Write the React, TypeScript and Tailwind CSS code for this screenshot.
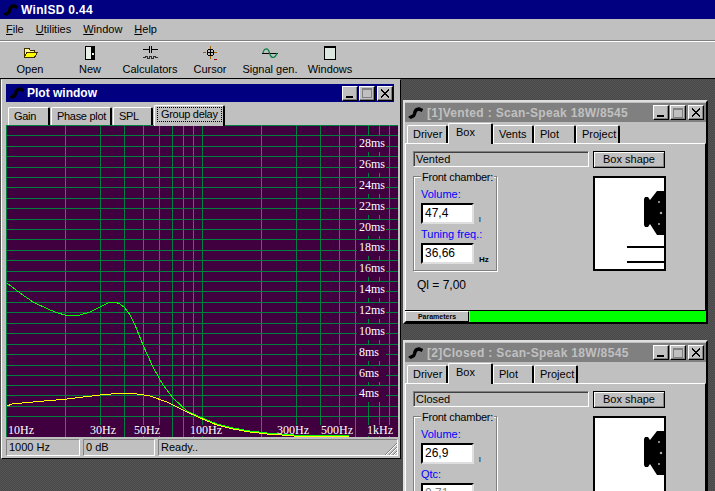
import type { ReactNode } from "react";

const vLines = [
  [65, 0], [100, 1], [124, 1], [143, 0], [159, 0], [172, 1], [183, 0], [193, 0], [202, 1],
  [261, 0], [296, 1], [320, 1], [339, 0], [355, 0], [368, 1], [379, 0], [389, 0],
];
const hLines = [
  135, 146, 156, 167, 177, 187, 198, 208, 219, 229, 239, 250, 260, 271, 281, 291, 302, 312, 323,
  333, 344, 354, 365, 375, 385, 395, 406, 416,
];
const msLabels = [
  ["28ms", 144], ["26ms", 165], ["24ms", 186], ["22ms", 207], ["20ms", 228], ["18ms", 248], ["16ms", 269],
  ["14ms", 290], ["12ms", 311], ["10ms", 332], ["8ms", 353], ["6ms", 374], ["4ms", 394],
] as const;
const hzLabels = [
  ["10Hz", 8, 28], ["30Hz", 90, 28], ["50Hz", 134, 28], ["100Hz", 190, 34], ["300Hz", 277, 34], ["500Hz", 321, 34], ["1kHz", 367, 28],
] as const;

const green =
  "7,283 12,287 20,293 33,302 50,310 58,313 65,315 80,315 90,312 100,307 108,303 115,302 120,304 125,308 130,315 135,325 143,345 153,367 163,385 173,398 187,411 200,417 217,424 233,428 250,431 267,433 282,434 300,435.5 349,435.5";
const yellow =
  "7,406 12,404 33,402 67,399 100,395 123,393 137,394 150,396 167,402 183,410 200,418 217,425 233,429 250,432 267,434 282,435 300,436.5 349,436.5";

// y coordinates above are taken from the screen, the plot starts at 6,125
function Chart() {
  return (
    <svg width={392} height={312} viewBox="6 125 392 312" className="block">
      <rect x={6} y={125} width={392} height={312} fill="#400040" />
      <g shapeRendering="crispEdges">
        <line x1={6.5} y1={125} x2={6.5} y2={437} stroke="#008040" />
        <line x1={6} y1={125.5} x2={398} y2={125.5} stroke="#008040" />
        {vLines.map(([x, bright]) => (
          <line key={x} x1={x + 0.5} y1={125} x2={x + 0.5} y2={437} stroke={bright ? "#008040" : "#3a7a60"} />
        ))}
        {hLines.map((y) => (
          <line key={y} x1={6} y1={y + 0.5} x2={398} y2={y + 0.5} stroke="#008040" />
        ))}
        {msLabels.map(([t, y]) => (
          <rect key={t} x={357} y={y - 8} width={29} height={16} fill="#400040" />
        ))}
        {hzLabels.map(([t, x, w]) => (
          <rect key={t} x={x - 1} y={425} width={w} height={11} fill="#400040" />
        ))}
        <polyline points={green} fill="none" stroke="#00ff00" />
        <polyline points={yellow} fill="none" stroke="#ffff00" />
      </g>
      <g fill="#ffffff" className="font-['Liberation_Serif',serif] text-[12px]">
        {msLabels.map(([t, y]) => (
          <text key={t} x={359} y={y + 3}>{t}</text>
        ))}
        {hzLabels.map(([t, x]) => (
          <text key={t} x={x} y={434}>{t}</text>
        ))}
      </g>
    </svg>
  );
}

function Logo() {
  return (
    <svg width={16} height={14} viewBox="0 0 16 14" className="shrink-0">
      <path d="M1.5 12 C3 10 6 11 6.5 8 C7 4.5 8.5 3 11 3 L14.5 4.5" fill="none" stroke="#000" strokeWidth={3.4} />
    </svg>
  );
}

function CtlBtn({ children }: { children: ReactNode }) {
  return (
    <div className="w-[16px] h-[15px] bg-[#c0c0c0] border border-t-white border-l-white border-r-black border-b-black shadow-[inset_-1px_-1px_0_#808080] flex items-center justify-center">
      {children}
    </div>
  );
}

function WinControls() {
  return (
    <div className="flex gap-[1px] items-center">
      <CtlBtn>
        <div className="w-[7px] h-[2px] bg-black mt-[7px] -ml-[1px]" />
      </CtlBtn>
      <CtlBtn>
        <div className="w-[10px] h-[10px] border border-[#808080] border-t-2" />
      </CtlBtn>
      <div className="ml-[1px]">
        <CtlBtn>
          <svg width={10} height={9} viewBox="0 0 10 9">
            <path d="M1 0.5 L9 8.5 M9 0.5 L1 8.5" stroke="#000" strokeWidth={2} shapeRendering="crispEdges" />
          </svg>
        </CtlBtn>
      </div>
    </div>
  );
}

function Tab({ label, w, active, focus }: { label: string; w: number; active?: boolean; focus?: boolean }) {
  return (
    <div
      style={{ width: w }}
      className={
        "border-l border-t border-r-2 border-white border-r-black rounded-t-[2px] bg-[#c0c0c0] flex items-center whitespace-nowrap " +
        (active ? "h-[21px] relative z-10 -mb-[1px] border-b-0 pb-[3px] pl-[7px]" : "h-[18px] pl-[5px]") +
        (focus ? " !pl-[2px]" : "")
      }
    >
      <span className={focus ? "border border-dotted border-black px-[3px] leading-[13px]" : ""}>{label}</span>
    </div>
  );
}

function ToolBtn({ icon, label }: { icon: ReactNode; label: string }) {
  return (
    <div className="w-[60px] flex flex-col items-center">
      <div className="h-[16px] flex items-center justify-center">{icon}</div>
      <span className="leading-[14px] mt-[1px] whitespace-nowrap">{label}</span>
    </div>
  );
}

const tools = [
  {
    label: "Open",
    icon: (
      <svg width={15} height={12} viewBox="0 0 15 12" shapeRendering="crispEdges">
        <path d="M1.5 1.5 H6 L7 3 H11.5 V5 H4 L1.5 10.5 Z" fill="#fff8a0" stroke="#403000" />
        <path d="M1.5 10.5 L4 5 H14.5 L11.5 10.5 Z" fill="#ffff00" stroke="#403000" />
      </svg>
    ),
  },
  {
    label: "New",
    icon: (
      <svg width={10} height={14} viewBox="0 0 10 14" shapeRendering="crispEdges">
        <rect x={0} y={0} width={10} height={14} fill="#000" />
        <rect x={1} y={1} width={5} height={12} fill="#e8f0e8" />
        <rect x={7} y={7} width={2} height={2} fill="#e8f0e8" />
      </svg>
    ),
  },
  {
    label: "Calculators",
    icon: (
      <svg width={15} height={14} viewBox="0 0 15 14" fill="none" stroke="#000" shapeRendering="crispEdges">
        <path d="M0 3.5 H6.5 M8.5 3.5 H15 M6.5 0 V7 M8.5 0 V7" />
        <path d="M0 11.5 H2 V10 H4 V12 H6 V10 H8 V12 H10 V10 H12 V11.5 H15" stroke="#303030" />
      </svg>
    ),
  },
  {
    label: "Cursor",
    icon: (
      <svg width={15} height={15} viewBox="0 0 15 15" fill="none" shapeRendering="crispEdges">
        <path d="M7.5 0 V3 M7.5 10 V13 M0 6.5 H3 M11 6.5 H14" stroke="#a06000" />
        <rect x={4.5} y={3.5} width={6} height={6} rx={2} stroke="#000" />
        <path d="M7.5 3 V10 M4 6.5 H11" stroke="#000" />
        <rect x={11} y={13} width={3} height={1} fill="#a00000" />
      </svg>
    ),
  },
  {
    label: "Signal gen.",
    icon: (
      <svg width={16} height={12} viewBox="0 0 16 12" fill="none">
        <path d="M0 6.5 H16" stroke="#000" />
        <path d="M1 6 C2 1 6 0 7.5 6 C9 12 13 12 15 6" stroke="#008040" strokeWidth={1.2} />
      </svg>
    ),
  },
  {
    label: "Windows",
    icon: <div className="w-[12px] h-[14px] border border-black border-t-2 bg-[#dce8e0]" />,
  },
];

function Speaker() {
  return (
    <div className="w-[73px] h-[95px] bg-white border-2 border-black relative shrink-0">
      <svg width={69} height={91} viewBox="0 0 69 91" className="absolute left-0 top-0">
        <path d="M50 19 H53 L55 22 L62 13 H69 V57 H62 L55 46 L53 49 H50 L49 47 V21 Z" fill="#000" />
        <circle cx={64} cy={24} r={1} fill="#b0b0b0" />
        <circle cx={66} cy={35} r={1.2} fill="#b0b0b0" />
        <circle cx={64} cy={46} r={1} fill="#b0b0b0" />
      </svg>
    </div>
  );
}

function Field({ value, dim }: { value: string; dim?: boolean }) {
  return (
    <div
      className={
        "w-[53px] h-[21px] bg-white border-2 border-t-black border-l-black border-r-[#dfdfdf] border-b-[#dfdfdf] pl-[2px] text-[12px] leading-[17px] " +
        (dim ? "text-[#808080]" : "text-black")
      }
    >
      {value}
    </div>
  );
}

function BoxWindow({
  top,
  title,
  tabs,
  boxType,
  first,
  second,
  vents,
  footer,
}: {
  top: string;
  title: string;
  tabs: [string, number][];
  boxType: string;
  first: string;
  second: [string, string, string];
  vents?: boolean;
  footer?: boolean;
}) {
  return (
    <div className={"absolute left-[403px] w-[305px] bg-[#c0c0c0] border-2 border-t-[#dfdfdf] border-l-[#dfdfdf] border-r-black border-b-black " + top}>
      <div className="h-[19px] mt-[1px] bg-[#808080] flex items-center pl-[3px] pr-[2px]">
        <Logo />
        <span className="ml-[3px] flex-1 font-bold text-[#c0c0c0] text-[12px] tracking-[0.33px] whitespace-nowrap">{title}</span>
        <WinControls />
      </div>
      <div className="flex items-end h-[21px] pl-[2px]">
        {tabs.map(([t, w]) => (
          <Tab key={t} label={t} w={w} active={t === "Box"} />
        ))}
      </div>
      <div className="h-[167px] border-t border-l border-white border-r border-r-black px-[7px] pt-[7px]">
        <div className="flex gap-[4px]">
          <div className="w-[176px] h-[16px] border border-t-[#808080] border-l-[#808080] border-r-white border-b-white shadow-[inset_1px_1px_0_#404040] pl-[2px] leading-[15px]">
            {boxType}
          </div>
          <div className="w-[72px] h-[17px] border border-black bg-[#c0c0c0] shadow-[inset_1px_1px_0_#fff,inset_-1px_-1px_0_#808080] flex items-center justify-center">
            Box shape
          </div>
        </div>
        <div className="flex gap-[96px] mt-[8px]">
          <div className="relative w-[84px] h-[95px] border border-[#808080] shadow-[1px_1px_0_#fff,inset_1px_1px_0_#fff] pl-[7px] pt-[10px] shrink-0">
            <span className="absolute left-[7px] -top-[6px] bg-[#c0c0c0] px-[1px] leading-[13px] whitespace-nowrap tracking-[-0.25px]">Front chamber:</span>
            <div className="text-[#0000ff] leading-[14px]">Volume:</div>
            <div className="flex items-end gap-[5px] mt-[2px]">
              <Field value={first} />
              <span className="text-[8px] leading-[9px]">l</span>
            </div>
            <div className="text-[#0000ff] leading-[14px] mt-[3px] whitespace-nowrap">{second[0]}</div>
            <div className="flex items-end gap-[5px] mt-[2px]">
              <Field value={second[1]} dim={!vents} />
              <span className="text-[8px] leading-[9px] font-bold">{second[2]}</span>
            </div>
          </div>
          <div className="relative">
            <Speaker />
            {vents && (
              <div className="absolute left-[34px] top-[70px] w-[37px] h-[17px] border-y-2 border-black" />
            )}
          </div>
        </div>
        {vents && <div className="mt-[7px] ml-[4px] leading-[14px] text-[12px]">Ql = 7,00</div>}
      </div>
      {footer && (
        <div className="h-[12px] flex gap-[1px] border-t border-black">
          <div className="w-[64px] border border-white border-r-black border-b-black text-[7px] leading-[10px] text-center font-bold">Parameters</div>
          <div className="flex-1 bg-[#00ff00]" />
        </div>
      )}
    </div>
  );
}

function StatusCell({ w, children, grow }: { w?: string; children?: ReactNode; grow?: boolean }) {
  return (
    <div
      className={
        "h-[17px] border border-t-[#808080] border-l-[#808080] border-r-white border-b-white pl-[2px] leading-[15px] " +
        (grow ? "flex-1 relative " : "") +
        (w ?? "")
      }
    >
      {children}
    </div>
  );
}

export default function App() {
  return (
    <div className="w-[715px] h-[491px] overflow-hidden flex flex-col bg-[#c0c0c0] text-black font-['Liberation_Sans',Arial,sans-serif] text-[11px]">
      <div className="h-[19px] bg-[#000080] flex items-center pl-[3px] shrink-0">
        <Logo />
        <span className="ml-[2px] text-white font-bold text-[12px] tracking-[0.3px]">WinISD 0.44</span>
      </div>
      <div className="h-[21px] flex items-center gap-[12px] pl-[6px] shrink-0">
        <span><u>F</u>ile</span>
        <span><u>U</u>tilities</span>
        <span><u>W</u>indow</span>
        <span><u>H</u>elp</span>
      </div>
      <div className="h-[38px] border-t border-t-[#808080] shrink-0 shadow-[inset_0_1px_0_#fff] flex pt-[4px]">
        {tools.map((t) => (
          <ToolBtn key={t.label} icon={t.icon} label={t.label} />
        ))}
      </div>
      <div className="relative flex-1 border-t border-t-black bg-[#4d4d4d] bg-[repeating-conic-gradient(#555555_0_25%,#484848_0_50%)] bg-[length:2px_2px]">
        {/* plot window */}
        <div className="absolute left-[1px] top-0 w-[400px] h-[380px] bg-[#c0c0c0] border-l border-l-white border-r border-r-black border-b border-b-black border-t border-t-[#c0c0c0] pl-[4px] pr-[2px] pt-[4px]">
          <div className="h-[18px] w-[388px] bg-[#000080] flex items-center pl-[3px] pr-[1px]">
            <Logo />
            <span className="ml-[2px] flex-1 font-bold text-white text-[12px]">Plot window</span>
            <WinControls />
          </div>
          <div className="flex items-end h-[23px] pl-[2px] gap-[1px] tracking-[-0.3px]">
            <Tab label="Gain" w={42} />
            <Tab label="Phase plot" w={61} />
            <Tab label="SPL" w={40} />
            <Tab label="Group delay" w={71} active focus />
          </div>
          <Chart />
          <div className="flex gap-[3px] mt-[2px]">
            <StatusCell w="w-[74px]">1000 Hz</StatusCell>
            <StatusCell w="w-[72px]">0 dB</StatusCell>
            <StatusCell grow>
              Ready..
              <svg width={13} height={13} viewBox="0 0 13 13" className="absolute right-0 bottom-0">
                <path d="M1 13 L13 1 M5 13 L13 5 M9 13 L13 9" stroke="#808080" />
                <path d="M2 13 L13 2 M6 13 L13 6 M10 13 L13 10" stroke="#fff" />
              </svg>
            </StatusCell>
          </div>
        </div>

        <BoxWindow
          top="top-[21px]"
          title="[1]Vented : Scan-Speak 18W/8545"
          tabs={[["Driver", 41], ["Box", 45], ["Vents", 41], ["Plot", 42], ["Project", 44]]}
          boxType="Vented"
          first="47,4"
          second={["Tuning freq.:", "36,66", "Hz"]}
          vents
          footer
        />
        <BoxWindow
          top="top-[261px]"
          title="[2]Closed : Scan-Speak 18W/8545"
          tabs={[["Driver", 41], ["Box", 45], ["Plot", 41], ["Project", 44]]}
          boxType="Closed"
          first="26,9"
          second={["Qtc:", "0,71", ""]}
        />
      </div>
    </div>
  );
}
